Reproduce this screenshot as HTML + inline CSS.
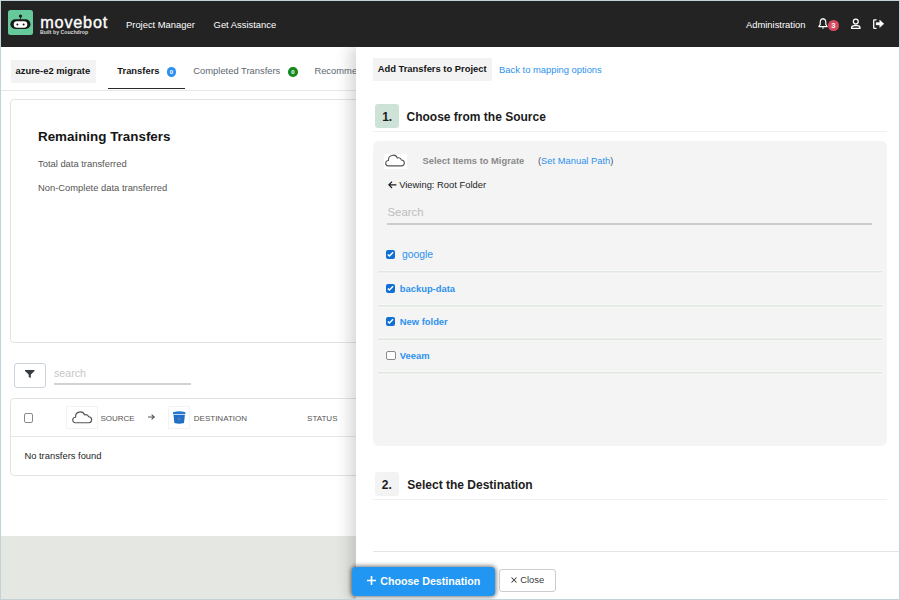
<!DOCTYPE html>
<html><head><meta charset="utf-8">
<style>
*{box-sizing:border-box;margin:0;padding:0}
html,body{width:900px;height:600px;overflow:hidden;background:#fff;font-family:"Liberation Sans",sans-serif;}
#frame{position:absolute;left:0;top:0;width:900px;height:600px;overflow:hidden;background:#fff}
.abs{position:absolute}
.t{position:absolute;white-space:nowrap;line-height:1}
svg{position:absolute;overflow:visible}
</style></head>
<body>
<div id="frame">
  <!-- left page -->
  <div class="abs" style="left:0;top:536px;width:900px;height:64px;background:#e5e7e3"></div>

  <!-- tabs -->
  <div class="abs" style="left:11px;top:60px;width:85px;height:23px;background:#f3f3f3"></div>
  <div class="t" style="left:15.6px;top:66.4px;font-size:9.4px;font-weight:bold;color:#151515">azure-e2 migrate</div>
  <div class="t" style="left:117.3px;top:66.4px;font-size:9.4px;font-weight:bold;color:#151515">Transfers</div>
  <div class="abs" style="left:166.7px;top:67.2px;width:9.6px;height:9.6px;border-radius:50%;background:#2d8ff0"></div>
  <div class="t" style="left:166.7px;top:69px;width:9.6px;text-align:center;font-size:6px;font-weight:bold;color:#fff">0</div>
  <div class="abs" style="left:108px;top:88px;width:76.5px;height:1.2px;background:#2a2a2a"></div>
  <div class="t" style="left:193.3px;top:66.4px;font-size:9.4px;color:#5c6770">Completed Transfers</div>
  <div class="abs" style="left:288.2px;top:67.2px;width:9.6px;height:9.6px;border-radius:50%;background:#15891d"></div>
  <div class="t" style="left:288.2px;top:69px;width:9.6px;text-align:center;font-size:6px;font-weight:bold;color:#fff">0</div>
  <div class="t" style="left:314.4px;top:66.4px;font-size:9.4px;color:#5c6770">Recommendations</div>
  <div class="abs" style="left:0;top:90px;width:900px;height:1px;background:#e8e8e8"></div>

  <!-- remaining card -->
  <div class="abs" style="left:10.2px;top:99.3px;width:500px;height:243.5px;border:1px solid #e3e3e3;border-radius:4px"></div>
  <div class="t" style="left:38px;top:130.1px;font-size:13.4px;font-weight:bold;color:#151515">Remaining Transfers</div>
  <div class="t" style="left:38px;top:159.1px;font-size:9.4px;color:#555">Total data transferred</div>
  <div class="t" style="left:38px;top:183.4px;font-size:9.4px;color:#555">Non-Complete data transferred</div>

  <!-- filter -->
  <div class="abs" style="left:14px;top:363.3px;width:32px;height:24.4px;border:1px solid #ccd3d9;border-radius:3px"></div>
  <svg style="left:25px;top:370.3px" width="9.5" height="8" viewBox="0 0 9.5 8"><path d="M0 0H9.5V0.9L5.8 4.6V8L3.7 6.9V4.6L0 0.9Z" fill="#343a40"/></svg>
  <div class="t" style="left:54px;top:368px;font-size:10.67px;color:#c6c6c6">search</div>
  <div class="abs" style="left:54px;top:383px;width:137px;height:1.5px;background:#d2d2d2"></div>

  <!-- table card -->
  <div class="abs" style="left:10.2px;top:398.4px;width:500px;height:77.6px;border:1px solid #e3e3e3;border-radius:4px"></div>
  <div class="abs" style="left:11px;top:435.7px;width:500px;height:1px;background:#e6e6e6"></div>
  <div class="abs" style="left:24px;top:413.3px;width:9.3px;height:9.3px;border:1px solid #8a8a8a;border-radius:2px;background:#fff"></div>
  <div class="abs" style="left:65.9px;top:406.2px;width:31.9px;height:22.8px;border:1px solid #f3f3f3"></div>
  <svg style="left:71.8px;top:411.7px" width="20" height="11.4" viewBox="0 0 20 11.4"><path d="M3.3 10.8H16.6A3 3 0 0 0 16.7 4.8A3.2 3.2 0 0 0 12.6 2.9A4.7 4.7 0 0 0 3.6 5.3A2.75 2.75 0 0 0 3.3 10.8Z" fill="none" stroke="#555" stroke-width="1.15" stroke-linejoin="round"/></svg>
  <div class="t" style="left:100.4px;top:414.7px;font-size:8px;color:#555">SOURCE</div>
  <svg style="left:148px;top:414px" width="7.2" height="6" viewBox="0 0 7.2 6"><path d="M0 3H6.2M3.6 0.6L6.3 3L3.6 5.4" fill="none" stroke="#555" stroke-width="1.1"/></svg>
  <div class="abs" style="left:167.8px;top:406.2px;width:22.6px;height:23.2px;border:1px solid #f3f3f3"></div>
  <svg style="left:173.4px;top:411.2px" width="12.4" height="12.8" viewBox="0 0 12.4 12.8"><path d="M0 1.2Q6.2 -0.6 12.4 1.2V3.2H0Z" fill="#2a78cf"/><path d="M0.5 3.9H11.9L11 12.1Q6.2 13.2 1.4 12.1Z" fill="#1f6fc8"/><rect x="0.3" y="3.25" width="11.8" height="0.55" fill="#b9d3f0"/><circle cx="6.2" cy="8" r="1.3" fill="none" stroke="#7a8a9a" stroke-width="0.7"/></svg>
  <div class="t" style="left:193.8px;top:414.7px;font-size:8px;color:#555">DESTINATION</div>
  <div class="t" style="left:307.1px;top:414.7px;font-size:8px;color:#555">STATUS</div>
  <div class="t" style="left:24.4px;top:451.3px;font-size:9.4px;color:#1e1e1e">No transfers found</div>

  <!-- panel -->
  <div class="abs" style="left:356px;top:46px;width:544px;height:554px;background:#fff;box-shadow:-6px 0 14px rgba(0,0,0,0.16)"></div>
  <div class="abs" style="left:373px;top:58.2px;width:119px;height:22.5px;background:#f3f3f3"></div>
  <div class="t" style="left:377.7px;top:64px;font-size:9.4px;font-weight:bold;color:#151515">Add Transfers to Project</div>
  <div class="t" style="left:499.1px;top:65px;font-size:9.4px;color:#2d92ee">Back to mapping options</div>

  <div class="abs" style="left:375.4px;top:104.3px;width:23.6px;height:23.4px;background:#cde3d7;border-radius:3px"></div>
  <div class="t" style="left:382.2px;top:110.5px;font-size:12px;font-weight:bold;color:#1c1c1c">1.</div>
  <div class="t" style="left:406.5px;top:110.5px;font-size:12px;font-weight:bold;color:#1c1c1c">Choose from the Source</div>
  <div class="abs" style="left:373px;top:131px;width:514px;height:1px;background:#f0f0f0"></div>

  <div class="abs" style="left:373px;top:140.8px;width:514px;height:304.8px;background:#f4f4f4;border-radius:6px"></div>
  <div class="abs" style="left:384px;top:154px;width:23px;height:15px;background:#fff"></div>
  <svg style="left:385.3px;top:155px" width="19.7" height="11.7" viewBox="0 0 20 11.4"><path d="M3.3 10.8H16.6A3 3 0 0 0 16.7 4.8A3.2 3.2 0 0 0 12.6 2.9A4.7 4.7 0 0 0 3.6 5.3A2.75 2.75 0 0 0 3.3 10.8Z" fill="none" stroke="#555" stroke-width="1.1" stroke-linejoin="round"/></svg>
  <div class="t" style="left:422.5px;top:156.8px;font-size:9.35px;font-weight:bold;color:#8a8a8a">Select Items to Migrate</div>
  <div class="t" style="left:537.9px;top:156.3px;font-size:9.4px;color:#555"><span>(</span><span style="color:#2d92ee">Set Manual Path</span><span>)</span></div>
  <svg style="left:388.3px;top:181px" width="8.4" height="7.6" viewBox="0 0 8.4 7.6"><path d="M8.4 3.8H1M4 0.6L0.9 3.8L4 7" fill="none" stroke="#1c1c1c" stroke-width="1.2"/></svg>
  <div class="t" style="left:399.2px;top:179.9px;font-size:9.4px;color:#1c1c1c">Viewing: Root Folder</div>
  <div class="t" style="left:387.5px;top:206.6px;font-size:11.4px;color:#bdbdbd">Search</div>
  <div class="abs" style="left:387px;top:223.2px;width:485px;height:1.5px;background:#cdcdcd"></div>

  <!-- list -->
  <div class="abs" style="left:377.5px;top:270px;width:504.5px;height:1px;background:#f8f8f9"></div>
  <div class="abs" style="left:377.5px;top:271px;width:504.5px;height:1px;background:#e1e8e1"></div>
  <div class="abs" style="left:377.5px;top:272px;width:504.5px;height:1px;background:#e9eee9"></div>
  <div class="abs" style="left:377.5px;top:273px;width:504.5px;height:1px;background:#f7f7f8"></div>
  <div class="abs" style="left:377.5px;top:304px;width:504.5px;height:1px;background:#f8f8f9"></div>
  <div class="abs" style="left:377.5px;top:305px;width:504.5px;height:1px;background:#e1e8e1"></div>
  <div class="abs" style="left:377.5px;top:306px;width:504.5px;height:1px;background:#e9eee9"></div>
  <div class="abs" style="left:377.5px;top:307px;width:504.5px;height:1px;background:#f7f7f8"></div>
  <div class="abs" style="left:377.5px;top:337px;width:504.5px;height:1px;background:#f8f8f9"></div>
  <div class="abs" style="left:377.5px;top:339px;width:504.5px;height:1px;background:#e1e8e1"></div>
  <div class="abs" style="left:377.5px;top:338px;width:504.5px;height:1px;background:#e9eee9"></div>
  <div class="abs" style="left:377.5px;top:340px;width:504.5px;height:1px;background:#f7f7f8"></div>
  <div class="abs" style="left:377.5px;top:371px;width:504.5px;height:1px;background:#f8f8f9"></div>
  <div class="abs" style="left:377.5px;top:372px;width:504.5px;height:1px;background:#e1e8e1"></div>
  <div class="abs" style="left:377.5px;top:373px;width:504.5px;height:1px;background:#e9eee9"></div>
  <div class="abs" style="left:377.5px;top:374px;width:504.5px;height:1px;background:#f7f7f8"></div>

  <div class="abs" style="left:386.3px;top:250px;width:9px;height:9px;background:#0f6fd6;border-radius:2px"></div>
  <svg style="left:386.3px;top:250px" width="9" height="9" viewBox="0 0 9 9"><path d="M1.8 4.5L3.4 6L7.1 2.3" fill="none" stroke="#fff" stroke-width="1.5"/></svg>
  <div class="abs" style="left:386.3px;top:283.6px;width:9px;height:9px;background:#0f6fd6;border-radius:2px"></div>
  <svg style="left:386.3px;top:283.6px" width="9" height="9" viewBox="0 0 9 9"><path d="M1.8 4.5L3.4 6L7.1 2.3" fill="none" stroke="#fff" stroke-width="1.5"/></svg>
  <div class="abs" style="left:386.3px;top:317.3px;width:9px;height:9px;background:#0f6fd6;border-radius:2px"></div>
  <svg style="left:386.3px;top:317.3px" width="9" height="9" viewBox="0 0 9 9"><path d="M1.8 4.5L3.4 6L7.1 2.3" fill="none" stroke="#fff" stroke-width="1.5"/></svg>
  <div class="abs" style="left:386.3px;top:350.8px;width:9.3px;height:9.3px;background:#fff;border:1px solid #8a8a8a;border-radius:2px"></div>

  <div class="t" style="left:401.9px;top:250px;font-size:10.4px;color:#2d92ee">google</div>
  <div class="t" style="left:399.8px;top:283.7px;font-size:9.4px;font-weight:bold;color:#2d92ee">backup-data</div>
  <div class="t" style="left:399.8px;top:317.4px;font-size:9.4px;font-weight:bold;color:#2d92ee">New folder</div>
  <div class="t" style="left:399.8px;top:351px;font-size:9.4px;font-weight:bold;color:#2d92ee">Veeam</div>

  <!-- step 2 -->
  <div class="abs" style="left:375.1px;top:472.3px;width:23.8px;height:23.4px;background:#f3f3f3;border-radius:3px"></div>
  <div class="t" style="left:381.8px;top:478.6px;font-size:12px;font-weight:bold;color:#1c1c1c">2.</div>
  <div class="t" style="left:407.3px;top:478.6px;font-size:12px;font-weight:bold;color:#1c1c1c">Select the Destination</div>
  <div class="abs" style="left:373px;top:499px;width:514px;height:1px;background:#f0f0f0"></div>

  <div class="abs" style="left:373px;top:551px;width:527px;height:1.2px;background:#e4e4e4"></div>

  <!-- footer buttons -->
  <div class="abs" style="left:352px;top:567px;width:143px;height:29px;background:#2196f3;border-radius:4px;box-shadow:0 0 4px 1px rgba(0,0,0,0.55)"></div>
  <svg style="left:367px;top:576px" width="9" height="9" viewBox="0 0 9 9"><path d="M4.5 0V9M0 4.5H9" stroke="#fff" stroke-width="1.6"/></svg>
  <div class="t" style="left:380.2px;top:575.8px;font-size:10.67px;font-weight:bold;color:#fff">Choose Destination</div>
  <div class="abs" style="left:499.3px;top:568.9px;width:56.5px;height:23px;background:#fff;border:1px solid #c9cdd1;border-radius:3px"></div>
  <svg style="left:510.7px;top:576.9px" width="6" height="6" viewBox="0 0 6 6"><path d="M0.5 0.5L5.5 5.5M5.5 0.5L0.5 5.5" stroke="#3a3a3a" stroke-width="1.05"/></svg>
  <div class="t" style="left:520.3px;top:575.6px;font-size:9.35px;color:#3a3a3a">Close</div>

  <!-- navbar -->
  <div class="abs" style="left:0;top:0;width:900px;height:47px;background:#232323"></div>
  <svg style="left:8px;top:10px" width="25" height="25" viewBox="0 0 25 25">
    <rect width="25" height="25" rx="2.5" fill="#66c99b"/>
    <rect x="2.4" y="9.25" width="20.1" height="9.75" rx="4.875" fill="#191919"/>
    <rect x="5.75" y="11.25" width="13.5" height="6.5" rx="3.25" fill="#fff"/>
    <circle cx="9.4" cy="14.5" r="1" fill="#191919"/>
    <circle cx="15.6" cy="14.5" r="1" fill="#191919"/>
    <circle cx="12.5" cy="6" r="1.6" fill="#191919"/>
    <rect x="12.1" y="6.5" width="0.8" height="3" fill="#191919"/>
  </svg>
  <div class="t" style="left:40.3px;top:13.9px;font-size:16.3px;color:#fff;letter-spacing:0.75px;-webkit-text-stroke:0.35px #fff">movebot</div>
  <div class="t" style="left:40px;top:29.8px;font-size:5.2px;font-weight:bold;color:#d8d8d8">Built by Couchdrop</div>
  <div class="t" style="left:126px;top:20px;font-size:9.4px;color:#fff">Project Manager</div>
  <div class="t" style="left:213.6px;top:20px;font-size:9.4px;color:#fff">Get Assistance</div>
  <div class="t" style="left:746px;top:19.6px;font-size:9.4px;color:#fff">Administration</div>
  <svg style="left:818px;top:18px" width="10" height="11.5" viewBox="0 0 10 11.5"><path d="M5 0.9C3.1 0.9 2.2 2.6 2.2 4.6V6.4L0.9 8.6H9.1L7.8 6.4V4.6C7.8 2.6 6.9 0.9 5 0.9Z" fill="none" stroke="#fff" stroke-width="1.15" stroke-linejoin="round"/><path d="M3.9 9.6A1.1 1.1 0 0 0 6.1 9.6Z" fill="#fff"/><rect x="4.55" y="0" width="0.9" height="1.2" fill="#fff"/></svg>
  <div class="abs" style="left:828px;top:20.1px;width:10.5px;height:10.5px;border-radius:50%;background:#d8485d"></div>
  <div class="t" style="left:828px;top:21.9px;width:10.5px;text-align:center;font-size:7.6px;font-weight:bold;color:#fff">3</div>
  <svg style="left:850px;top:18px" width="12" height="12" viewBox="0 0 12 12"><circle cx="5.8" cy="3.6" r="2.45" fill="none" stroke="#fff" stroke-width="1.25"/><path d="M1.5 10.3Q1.5 7.6 4.3 7.6H7.3Q10.1 7.6 10.1 10.3Z" fill="none" stroke="#fff" stroke-width="1.2" stroke-linejoin="round"/></svg>
  <svg style="left:872px;top:18px" width="13" height="12" viewBox="0 0 13 12"><path d="M4.6 1.8H2.4Q1.7 1.8 1.7 2.5V9.7Q1.7 10.4 2.4 10.4H4.6" fill="none" stroke="#fff" stroke-width="1.3"/><path d="M4.1 4.6H7.7V2.1L11.9 5.8L7.7 9.5V7H4.1Z" fill="#fff" stroke="#fff" stroke-width="0.4" stroke-linejoin="round"/></svg>

  <!-- outer border -->
  <div class="abs" style="left:0;top:0;width:900px;height:600px;border:1px solid #c2d2d9;pointer-events:none"></div>
</div>
</body></html>
